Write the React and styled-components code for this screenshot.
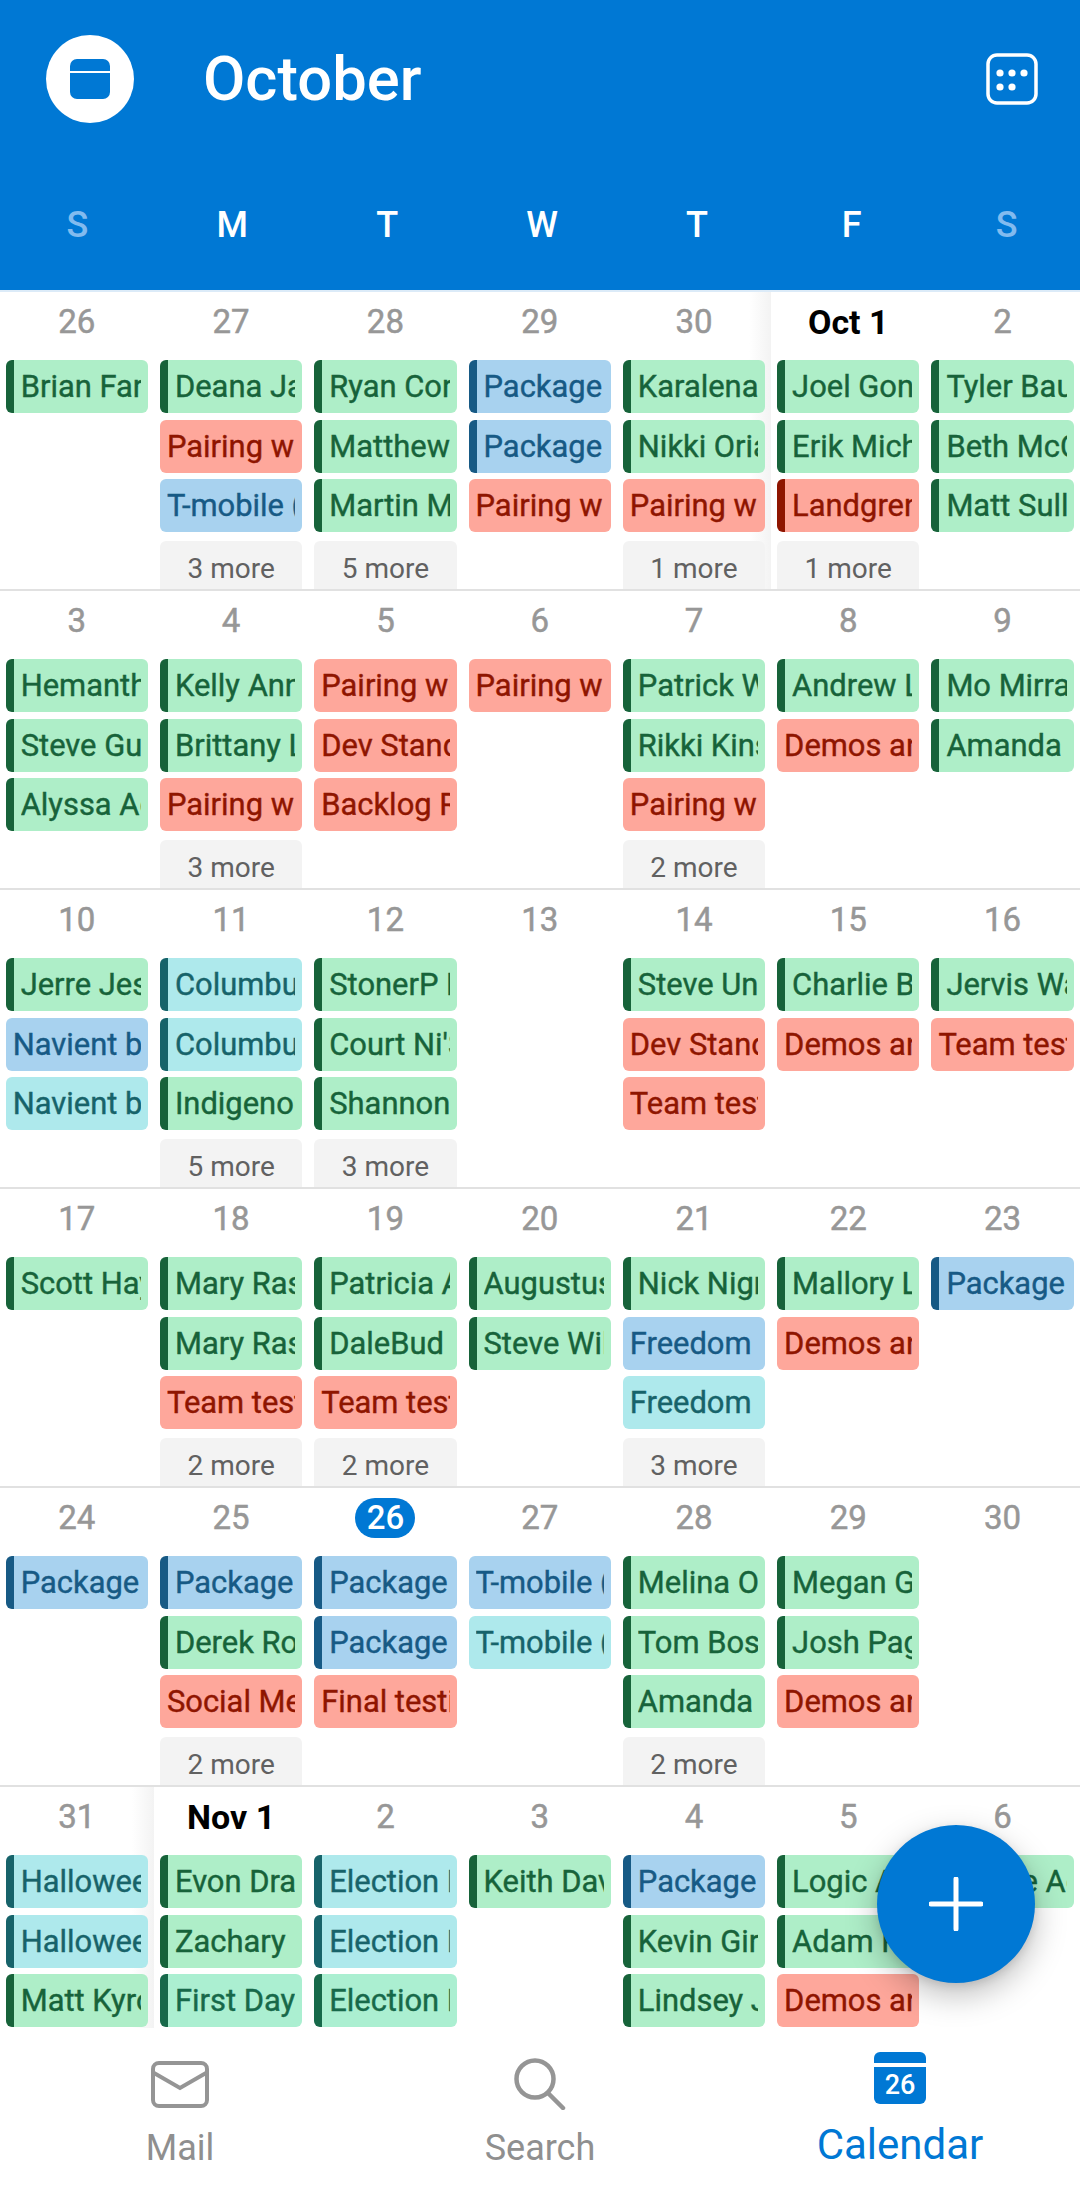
import React from "react";
import styled, { createGlobalStyle } from "styled-components";

const BLUE = "#0078d4";

const palette = {
  g: { bg: "#aeeec8", fg: "#17633a" },
  m: { bg: "#abefd1", fg: "#17694a" },
  r: { bg: "#fea79b", fg: "#8f1500" },
  b: { bg: "#a8d2ef", fg: "#175a85" },
  t: { bg: "#aee9ec", fg: "#17636a" },
};

// first letter is the colour, uppercase means the event has the dark stripe
const weeks = [
  [
    { d: "26", ev: ["G Brian Farrell"] },
    { d: "27", ev: ["G Deana Jackson", "r Pairing with", "b T-mobile (c"], more: 3 },
    { d: "28", ev: ["G Ryan Cortez", "G Matthew S", "G Martin Moore"], more: 5 },
    { d: "29", ev: ["B Package", "B Package", "r Pairing with"] },
    { d: "30", ev: ["G Karalena", "G Nikki Oriana", "r Pairing with"], more: 1, fade: true },
    { d: "Oct 1", first: true, ev: ["G Joel Gonzalez", "G Erik Michaels", "R Landgren"], more: 1 },
    { d: "2", ev: ["G Tyler Bauer", "G Beth McCoy", "G Matt Sullivan"] },
  ],
  [
    { d: "3", ev: ["G Hemanth K", "G Steve Gunn", "G Alyssa Adams"] },
    { d: "4", ev: ["G Kelly Anne", "G Brittany Lee", "r Pairing with"], more: 3 },
    { d: "5", ev: ["r Pairing with", "r Dev Standup", "r Backlog Refine"] },
    { d: "6", ev: ["r Pairing with"] },
    { d: "7", ev: ["G Patrick Wood", "G Rikki Kinsey", "r Pairing with"], more: 2 },
    { d: "8", ev: ["G Andrew Lane", "r Demos and"] },
    { d: "9", ev: ["G Mo Mirra", "G Amanda"] },
  ],
  [
    { d: "10", ev: ["G Jerre Jessup", "b Navient bug", "t Navient bug"] },
    { d: "11", ev: ["T Columbus", "T Columbus", "G Indigenous"], more: 5 },
    { d: "12", ev: ["G StonerP Day", "G Court Ni'Shae", "G Shannon"], more: 3 },
    { d: "13", ev: [] },
    { d: "14", ev: ["G Steve Unger", "r Dev Standup", "r Team testing"] },
    { d: "15", ev: ["G Charlie Bell", "r Demos and"] },
    { d: "16", ev: ["G Jervis Walker", "r Team testing"] },
  ],
  [
    { d: "17", ev: ["G Scott Hayes"] },
    { d: "18", ev: ["G Mary Rasmus", "G Mary Rasmus", "r Team testing"], more: 2 },
    { d: "19", ev: ["G Patricia Allen", "G DaleBud", "r Team testing"], more: 2 },
    { d: "20", ev: ["G Augustus", "G Steve Wilson"] },
    { d: "21", ev: ["G Nick Nigro", "b Freedom", "t Freedom"], more: 3 },
    { d: "22", ev: ["G Mallory Lee", "r Demos and"] },
    { d: "23", ev: ["B Package"] },
  ],
  [
    { d: "24", ev: ["B Package"] },
    { d: "25", ev: ["B Package", "G Derek Rogers", "r Social Media"], more: 2 },
    { d: "26", today: true, ev: ["B Package", "B Package", "r Final testing"] },
    { d: "27", ev: ["b T-mobile (c", "t T-mobile (c"] },
    { d: "28", ev: ["G Melina Ortiz", "G Tom Bosley", "G Amanda"], more: 2 },
    { d: "29", ev: ["G Megan Grant", "G Josh Page", "r Demos and"] },
    { d: "30", ev: [] },
  ],
  [
    { d: "31", fade: true, ev: ["T Halloween", "T Halloween", "G Matt Kyrot"] },
    { d: "Nov 1", first: true, ev: ["G Evon Drake", "G Zachary", "M First Day of"] },
    { d: "2", ev: ["T Election Day", "T Election Day", "M Election Day"] },
    { d: "3", ev: ["G Keith Davis"] },
    { d: "4", ev: ["B Package", "G Kevin Girard", "G Lindsey Jones"] },
    { d: "5", ev: ["G Logic App", "G Adam Reed", "r Demos and"] },
    { d: "6", ev: ["G Wayne Adams"] },
  ],
];

const weekdays = ["S", "M", "T", "W", "T", "F", "S"];

const GlobalStyle = createGlobalStyle`
  html, body {
    margin: 0;
    padding: 0;
    background: #fff;
  }
  * {
    box-sizing: border-box;
  }
`;

const Screen = styled.div`
  position: relative;
  width: 1080px;
  height: 2187px;
  display: flex;
  flex-direction: column;
  overflow: hidden;
  background: #fff;
  font-family: Roboto, "Liberation Sans", sans-serif;
`;

const Header = styled.header`
  height: 292px;
  flex: none;
  display: flex;
  flex-direction: column;
  background: ${BLUE};
  border-bottom: 2px solid #dcebf8;
`;

const TopBar = styled.div`
  height: 158px;
  display: flex;
  align-items: center;
  padding: 0 42px 0 46px;
`;

const Avatar = styled.div`
  width: 88px;
  height: 88px;
  border-radius: 50%;
  background: #fff;
  display: flex;
  align-items: center;
  justify-content: center;
`;

const Title = styled.h1`
  flex: 1;
  margin: 0 0 0 69px;
  color: #fff;
  font-size: 61.5px;
  font-weight: 500;
  line-height: 70px;
`;

const Weekdays = styled.div`
  display: grid;
  grid-template-columns: repeat(7, 1fr);
  margin: 43px -4px 0 0;
`;

const Weekday = styled.div`
  text-align: center;
  font-size: 36px;
  font-weight: 500;
  line-height: 48px;
  color: ${(p) => (p.$weekend ? "#82bbef" : "#fff")};
`;

const Grid = styled.main`
  flex: 1;
  min-height: 0;
  overflow: hidden;
`;

const Week = styled.section`
  height: 299px;
  display: grid;
  grid-template-columns: repeat(7, 1fr);
  border-bottom: 2px solid #e1e1e1;
  overflow: hidden;
`;

const Day = styled.div`
  min-width: 0;
  padding: 0 6.3px 0 5.7px;
  display: flex;
  flex-direction: column;
  background: ${(p) =>
    p.$fade ? "linear-gradient(to right, #fff calc(100% - 22px), #f3f3f3)" : "none"};
`;

const DayHead = styled.div`
  height: 68px;
  flex: none;
  padding-bottom: 8px;
  display: flex;
  align-items: center;
  justify-content: center;
`;

const DayNumber = styled.span`
  font-size: 33px;
  line-height: 40px;
  font-weight: 400;
  -webkit-text-stroke: 0.5px currentColor;
  color: #979797;
  ${(p) =>
    p.$first && "color: #000; font-weight: 700; font-size: 34px; -webkit-text-stroke: 0;"}
  ${(p) =>
    p.$today &&
    `color: #fff;
     font-weight: 500;
     -webkit-text-stroke: 0;
     background: ${BLUE};
     width: 60px;
     height: 40px;
     border-radius: 20px;
     text-align: center;`}
`;

const Event = styled.div`
  height: 53px;
  flex: none;
  display: flex;
  align-items: center;
  margin-bottom: 6.5px;
  padding: 0 7px;
  border-radius: 6px;
  font-size: 30.9px;
  font-weight: 400;
  -webkit-text-stroke: 0.4px currentColor;
  background: ${(p) => palette[p.$kind].bg};
  color: ${(p) => palette[p.$kind].fg};
  border-left: ${(p) => (p.$stripe ? `8px solid ${palette[p.$kind].fg}` : "none")};
`;

const EventText = styled.span`
  display: block;
  min-width: 0;
  overflow: hidden;
  white-space: nowrap;
`;

const More = styled.div`
  height: 53px;
  flex: none;
  margin-top: 2.5px;
  padding-top: 1px;
  display: flex;
  align-items: center;
  justify-content: center;
  border-radius: 6px;
  background: #f3f3f3;
  color: #616161;
  font-size: 28px;
`;

const Fab = styled.button`
  position: absolute;
  right: 45px;
  bottom: 204px;
  width: 158px;
  height: 158px;
  border: none;
  padding: 0;
  border-radius: 50%;
  background: ${BLUE};
  display: flex;
  align-items: center;
  justify-content: center;
  box-shadow: 0 12px 32px rgba(0, 0, 0, 0.26), 0 3px 8px rgba(0, 0, 0, 0.1);
`;

const Nav = styled.nav`
  flex: none;
  height: 159px;
  display: grid;
  grid-template-columns: repeat(3, 1fr);
  background: #fff;
`;

const NavItem = styled.div`
  display: flex;
  flex-direction: column;
  align-items: center;
  color: ${(p) => (p.$active ? BLUE : "#8f8f8f")};
  font-size: ${(p) => (p.$active ? "42px" : "36px")};
`;

const NavIcon = styled.div`
  height: ${(p) => (p.$active ? "93px" : "96px")};
  padding-top: ${(p) => p.$top}px;
  display: flex;
  align-items: flex-start;
  justify-content: center;
`;

const NavLabel = styled.span`
  line-height: 48px;
`;

const CalBadge = styled.div`
  width: 52px;
  height: 52px;
  border-radius: 6px;
  overflow: hidden;
  display: flex;
  flex-direction: column;
  gap: 4px;
  &::before {
    content: "";
    height: 11px;
    background: ${BLUE};
    flex: none;
  }
`;

const CalBadgeBody = styled.div`
  flex: 1;
  background: ${BLUE};
  color: #fff;
  font-size: 27px;
  font-weight: 500;
  line-height: 37px;
  text-align: center;
`;

function CalendarGlyph() {
  return (
    <svg width="40" height="40" viewBox="0 0 40 40">
      <path d="M7 0h26a7 7 0 0 1 7 7v5H0V7a7 7 0 0 1 7-7z" fill={BLUE} />
      <path d="M0 14h40v19a7 7 0 0 1-7 7H7a7 7 0 0 1-7-7z" fill={BLUE} />
    </svg>
  );
}

function DotsGlyph() {
  return (
    <svg width="52" height="52" viewBox="0 0 52 52" fill="#fff">
      <rect x="2" y="2" width="48" height="48" rx="9" fill="none" stroke="#fff" strokeWidth="3.5" />
      <circle cx="14" cy="20" r="3.6" />
      <circle cx="26" cy="20" r="3.6" />
      <circle cx="38" cy="20" r="3.6" />
      <circle cx="14" cy="34" r="3.6" />
      <circle cx="26" cy="34" r="3.6" />
    </svg>
  );
}

function PlusGlyph() {
  return (
    <svg width="54" height="54" viewBox="0 0 54 54">
      <path d="M27 2v50M2 27h50" stroke="#fff" strokeWidth="5" strokeLinecap="round" />
    </svg>
  );
}

function MailGlyph() {
  return (
    <svg width="58" height="47" viewBox="0 0 58 47" fill="none" stroke="#959595" strokeWidth="4">
      <rect x="2" y="2" width="54" height="43" rx="6" />
      <path d="M3 12l26 15 26-15" />
    </svg>
  );
}

function SearchGlyph() {
  return (
    <svg width="52" height="52" viewBox="0 0 52 52" fill="none" stroke="#959595" strokeWidth="4.5">
      <circle cx="21" cy="21" r="18.5" />
      <path d="M34 35l15 15" strokeLinecap="round" />
    </svg>
  );
}

function DayCell({ day }) {
  return (
    <Day $fade={day.fade}>
      <DayHead>
        <DayNumber $first={day.first} $today={day.today}>
          {day.d}
        </DayNumber>
      </DayHead>
      {day.ev.map((item, i) => {
        const key = item[0];
        const kind = key.toLowerCase();
        return (
          <Event key={i} $kind={kind} $stripe={key !== kind}>
            <EventText>{item.slice(2)}</EventText>
          </Event>
        );
      })}
      {day.more && <More>{day.more} more</More>}
    </Day>
  );
}

export default function App() {
  return (
    <Screen>
      <GlobalStyle />
      <Header>
        <TopBar>
          <Avatar>
            <CalendarGlyph />
          </Avatar>
          <Title>October</Title>
          <DotsGlyph />
        </TopBar>
        <Weekdays>
          {weekdays.map((w, i) => (
            <Weekday key={i} $weekend={i === 0 || i === 6}>
              {w}
            </Weekday>
          ))}
        </Weekdays>
      </Header>
      <Grid>
        {weeks.map((week, i) => (
          <Week key={i}>
            {week.map((day, j) => (
              <DayCell key={j} day={day} />
            ))}
          </Week>
        ))}
      </Grid>
      <Nav>
        <NavItem>
          <NavIcon $top={33}>
            <MailGlyph />
          </NavIcon>
          <NavLabel>Mail</NavLabel>
        </NavItem>
        <NavItem>
          <NavIcon $top={30}>
            <SearchGlyph />
          </NavIcon>
          <NavLabel>Search</NavLabel>
        </NavItem>
        <NavItem $active>
          <NavIcon $active $top={24}>
            <CalBadge>
              <CalBadgeBody>26</CalBadgeBody>
            </CalBadge>
          </NavIcon>
          <NavLabel>Calendar</NavLabel>
        </NavItem>
      </Nav>
      <Fab aria-label="New event">
        <PlusGlyph />
      </Fab>
    </Screen>
  );
}
